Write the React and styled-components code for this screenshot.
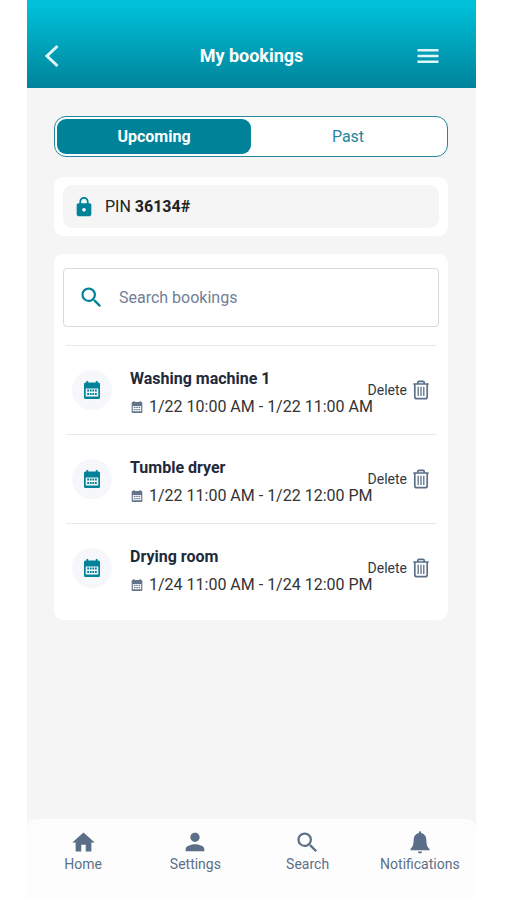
import React, { useState } from 'react';
import styled, { createGlobalStyle } from 'styled-components';
import { MdHome, MdLock, MdPerson, MdSearch } from 'react-icons/md';

const GlobalStyle = createGlobalStyle`
    * {
        box-sizing: border-box;
    }

    body {
        margin: 0;
        background: #ffffff;
        font-family: Roboto, sans-serif;
    }

    button, input {
        font-family: inherit;
    }
`;

const Screen = styled.div`
    min-height: 100vh;
    margin: 0 31px 0 27px;
    display: flex;
    flex-direction: column;
    background: #f5f5f5;
`;

const Header = styled.header`
    height: 88px;
    padding: 24px 37px 0 13px;
    display: flex;
    align-items: center;
    background: linear-gradient(#00bfd8 8%, #00839a);
    color: #ffffff;
`;

const Title = styled.h1`
    flex: 1;
    margin: 0;
    font-size: 18px;
    line-height: 24px;
    font-weight: 700;
    text-align: center;
`;

const IconButton = styled.button`
    display: flex;
    padding: 0;
    border: 0;
    background: none;
    color: #dff6fa;
    cursor: pointer;
`;

const BackButton = styled(IconButton)`
    width: 46px;
`;

const Main = styled.main`
    flex: 1;
    padding: 28px 28px 18px 27px;
    display: flex;
    flex-direction: column;
    gap: 18px;
`;

const Tabs = styled.div`
    display: flex;
    margin-bottom: 2px;
    padding: 2px;
    border: 1px solid #25869c;
    border-radius: 12px;
    background: #ffffff;
`;

const Tab = styled.button`
    flex: 1;
    height: 35px;
    border: 0;
    border-radius: 9px;
    background: ${(props) => (props.$active ? '#008299' : 'transparent')};
    color: ${(props) => (props.$active ? '#ffffff' : '#25869c')};
    font-size: 16px;
    font-weight: ${(props) => (props.$active ? 700 : 400)};
    cursor: pointer;
`;

const Card = styled.section`
    padding: ${(props) => props.$padding};
    border-radius: 9px;
    background: #ffffff;
`;

const Pin = styled.div`
    height: 43px;
    padding: 0 10px;
    display: flex;
    align-items: center;
    gap: 10px;
    border-radius: 9px;
    background: #f5f5f5;
    color: #222222;
    font-size: 16px;

    svg {
        color: #008299;
    }
`;

const SearchBox = styled.label`
    height: 59px;
    margin-bottom: 18px;
    padding: 0 14px;
    display: flex;
    align-items: center;
    gap: 14px;
    border: 1px solid #d5dade;
    border-radius: 4px;
    color: #008299;
`;

const SearchInput = styled.input`
    flex: 1;
    min-width: 0;
    padding: 0;
    border: 0;
    outline: 0;
    background: none;
    color: #1e293b;
    font-size: 16px;

    &::placeholder {
        color: #718096;
        opacity: 1;
    }
`;

const List = styled.ul`
    margin: 0 3px;
    padding: 0;
    list-style: none;
`;

const Row = styled.li`
    height: 89px;
    padding: 0 7px 0 6px;
    display: flex;
    align-items: center;
    border-top: 1px solid #e8e8e8;
`;

const Avatar = styled.div`
    flex: none;
    width: 40px;
    height: 40px;
    margin-right: 18px;
    display: flex;
    align-items: center;
    justify-content: center;
    border-radius: 50%;
    background: #f5f7fa;
    color: #008299;
`;

// Long times may run under the delete button on narrow screens
const Details = styled.div`
    flex: 1;
    min-width: 0;
    padding-top: 6px;
    white-space: nowrap;
`;

const Name = styled.h2`
    margin: 0;
    color: #1e293b;
    font-size: 16px;
    line-height: 28px;
    font-weight: 700;
`;

const Time = styled.div`
    display: flex;
    align-items: center;
    gap: 6px;
    padding-left: 1px;
    color: #333333;
    font-size: 16px;
    line-height: 28px;

    svg {
        flex: none;
        color: #64748b;
    }
`;

const DeleteButton = styled(IconButton)`
    flex: none;
    align-items: center;
    gap: 6px;
    color: #333a44;
    font-size: 14px;

    svg {
        color: #5b7088;
    }
`;

const BottomNav = styled.nav`
    height: 81px;
    padding-top: 11px;
    display: grid;
    grid-template-columns: repeat(4, 1fr);
    border-radius: 9px 9px 0 0;
    background: #fdfdfd;
`;

const NavLink = styled.a`
    display: flex;
    flex-direction: column;
    align-items: center;
    color: #5b7088;
    font-size: 14px;
    line-height: 20px;
    text-decoration: none;
`;

function BackIcon() {
    return (
        <svg width="24" height="24" viewBox="0 0 24 24" fill="none" stroke="currentColor" strokeWidth="3" aria-hidden="true">
            <path d="M17.500 2 7 12l10.500 10" />
        </svg>
    );
}

function MenuIcon() {
    return (
        <svg width="22" height="16" viewBox="0 0 22 16" fill="currentColor" aria-hidden="true">
            <path d="M0.500 1h21v2.500h-21zM0.500 6.800h21v2.500h-21zM0.500 12.500h21V15h-21z" />
        </svg>
    );
}

function CalendarIcon({ size }) {
    return (
        <svg width={size} height={size} viewBox="0 0 18 18" aria-hidden="true">
            <path
                fill="currentColor"
                fillRule="evenodd"
                d="M3.500 0h1.700v1.500h7.600V0h1.700v1.500h1a1.500 1.500 0 0 1 1.500 1.500v13.500a1.500 1.500 0 0 1-1.500 1.500h-13A1.500 1.500 0 0 1 1 16.500V3a1.500 1.500 0 0 1 1.500-1.500h1zM2.700 7.500v8h12.600v-8z"
            />
            <path
                fill="currentColor"
                d="M4.200 8.600h1.900v2H4.200zM6.900 8.600h1.700v2H6.900zM9.400 8.600h1.700v2H9.400zM11.900 8.600h1.900v2h-1.900zM4.200 12h1.900v2H4.200zM6.900 12h1.700v2H6.900zM9.400 12h1.700v2H9.400zM11.900 12h1.900v2h-1.900z"
            />
        </svg>
    );
}

function TrashIcon() {
    return (
        <svg width="16" height="20" viewBox="0 0 16 20" fill="none" stroke="currentColor" strokeWidth="1.700" aria-hidden="true">
            <path d="M0.300 4h15.400M4.800 3.800V2.500a1.200 1.200 0 0 1 1.200-1.200h4a1.200 1.200 0 0 1 1.200 1.200v1.300" />
            <path d="M1.800 4v12.700a2 2 0 0 0 2 2h8.400a2 2 0 0 0 2-2V4" />
            <path strokeWidth="1.300" d="M5.200 6.800v9.200M8 6.800v9.200M10.800 6.800v9.200" />
        </svg>
    );
}

function BellIcon() {
    return (
        <svg width="24" height="24" viewBox="0 0 24 24" fill="currentColor" aria-hidden="true">
            <path d="M10.900 2.300a1.100 1.100 0 0 1 2.200 0v.6c3.300.6 5 3 5.200 6.400.3 4.300.3 7.200 3.200 9.700v1.200h-19V19c2.900-2.500 2.900-5.400 3.200-9.700.2-3.400 1.900-5.800 5.200-6.400zM9.900 21.500h4.200a2.100 1.900 0 0 1-4.200 0z" />
        </svg>
    );
}

const bookings = [
    { id: 1, name: 'Washing machine 1', time: '1/22 10:00 AM - 1/22 11:00 AM' },
    { id: 2, name: 'Tumble dryer', time: '1/22 11:00 AM - 1/22 12:00 PM' },
    { id: 3, name: 'Drying room', time: '1/24 11:00 AM - 1/24 12:00 PM' },
];

const links = [
    { label: 'Home', icon: <MdHome size={27} /> },
    { label: 'Settings', icon: <MdPerson size={28} /> },
    { label: 'Search', icon: <MdSearch size={27} /> },
    { label: 'Notifications', icon: <BellIcon /> },
];

const NavIcon = styled.span`
    height: 24px;
    display: flex;
    align-items: center;
`;

// Bookings screen
function App() {
    const [tab, setTab] = useState('Upcoming');
    const [query, setQuery] = useState('');

    function renderTab(name) {
        return (
            <Tab key={name} type="button" $active={tab === name} aria-pressed={tab === name} onClick={() => setTab(name)}>
                {name}
            </Tab>
        );
    }

    function renderBooking(booking) {
        return (
            <Row key={booking.id}>
                <Avatar>
                    <CalendarIcon size={18} />
                </Avatar>
                <Details>
                    <Name>{booking.name}</Name>
                    <Time>
                        <CalendarIcon size={12} />
                        {booking.time}
                    </Time>
                </Details>
                <DeleteButton type="button">
                    Delete
                    <TrashIcon />
                </DeleteButton>
            </Row>
        );
    }

    return (
        <>
            <GlobalStyle />
            <Screen>
                <Header>
                    <BackButton type="button" aria-label="Back">
                        <BackIcon />
                    </BackButton>
                    <Title>My bookings</Title>
                    <IconButton type="button" aria-label="Menu">
                        <MenuIcon />
                    </IconButton>
                </Header>
                <Main>
                    <Tabs>{['Upcoming', 'Past'].map(renderTab)}</Tabs>
                    <Card $padding="8px 9px">
                        <Pin>
                            <MdLock size={22} />
                            <span>PIN <b>36134#</b></span>
                        </Pin>
                    </Card>
                    <Card $padding="14px 9px 8px">
                        <SearchBox>
                            <MdSearch size={27} />
                            <SearchInput
                                type="text"
                                aria-label="Search bookings"
                                placeholder="Search bookings"
                                value={query}
                                onChange={(e) => setQuery(e.target.value)}
                            />
                        </SearchBox>
                        <List>
                            {bookings
                                .filter((b) => b.name.toLowerCase().includes(query.toLowerCase()))
                                .map(renderBooking)}
                        </List>
                    </Card>
                </Main>
                <BottomNav>
                    {links.map((link) => (
                        <NavLink key={link.label} href="#">
                            <NavIcon>{link.icon}</NavIcon>
                            {link.label}
                        </NavLink>
                    ))}
                </BottomNav>
            </Screen>
        </>
    );
}

export default App;
